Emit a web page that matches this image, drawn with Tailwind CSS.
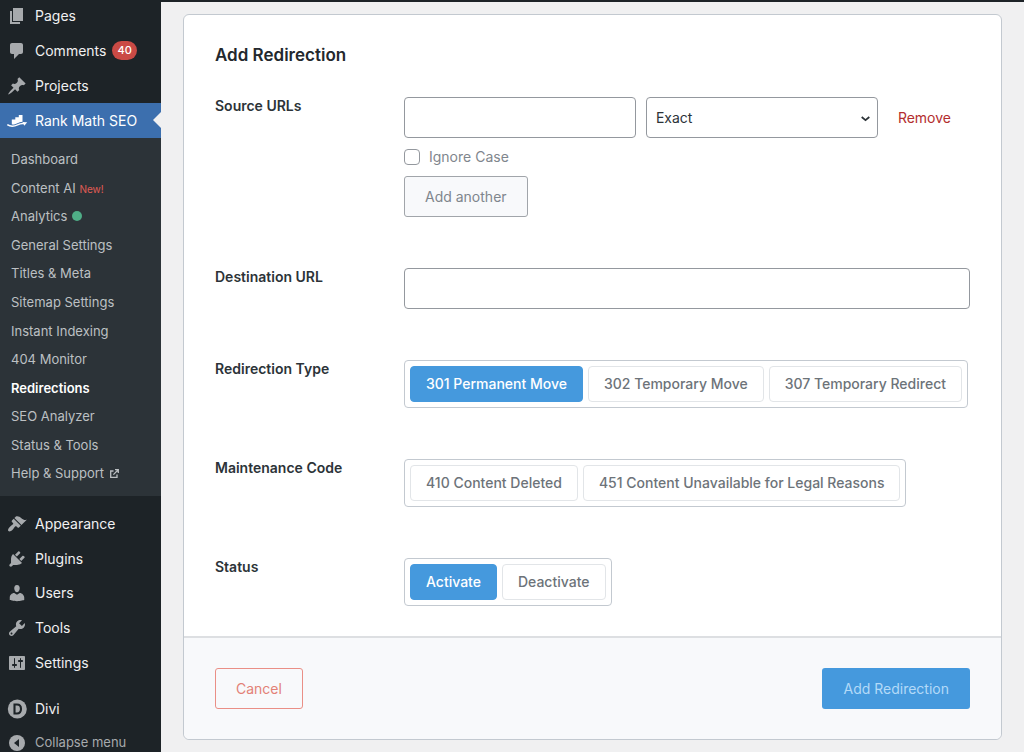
<!DOCTYPE html>
<html lang="en">
<head>
<meta charset="utf-8">
<meta name="viewport" content="width=device-width, initial-scale=1">
<title>Redirections</title>
<script src="https://cdn.jsdelivr.net/npm/@tailwindcss/browser@4"></script>
</head>
<body class="min-h-screen bg-[#f0f0f1] font-['Inter','Liberation_Sans',sans-serif] text-sm text-[#2c3338]">
<div class="flex h-screen overflow-hidden border-t-2 border-[#1d2327]">

  <!-- Admin menu -->
  <nav aria-label="Main menu" class="-mt-1 w-[161px] shrink-0 bg-[#1d2327] text-[#f0f0f1]">
    <ul>
      <li><a href="#" class="flex h-[35px] items-center gap-2 pl-[7px]">
        <svg class="size-5 fill-[#a7aaad]" viewBox="0 0 20 20" aria-hidden="true"><path d="M6 15V2h10v13H6zm-1 1h8v2H3V5h2v11z"/></svg>Pages</a></li>
      <li><a href="#" class="flex h-[35px] items-center gap-2 pl-[7px]">
        <svg class="size-5 fill-[#a7aaad]" viewBox="0 0 20 20" aria-hidden="true"><path d="M5 2h9c1.1 0 2 .9 2 2v7c0 1.1-.9 2-2 2h-2l-5 5v-5H5c-1.1 0-2-.9-2-2V4c0-1.1.9-2 2-2z"/></svg>
        <span class="flex items-center gap-[6px]">Comments <span class="flex h-[19px] items-center rounded-full bg-[#ca4a45] px-[5px] text-[11px] font-medium text-white">40</span></span></a></li>
      <li><a href="#" class="flex h-[35px] items-center gap-2 pl-[7px]">
        <svg class="size-5 fill-[#a7aaad]" viewBox="0 0 20 20" aria-hidden="true"><path d="M10.44 3.02l1.82-1.82 6.36 6.35-1.83 1.82c-1.05-.68-2.48-.57-3.41.36l-.75.75c-.92.93-1.04 2.35-.35 3.41l-1.83 1.82-2.41-2.41-2.8 2.79c-.42.42-3.38 2.71-3.8 2.29s1.86-3.39 2.28-3.81l2.79-2.79L4.1 9.36l1.83-1.82c1.05.69 2.48.57 3.4-.36l.75-.75c.93-.92 1.05-2.35.36-3.41z"/></svg>Projects</a></li>
      <li>
        <a href="#" class="relative flex h-[35px] items-center gap-2 bg-[#3c6fae] pl-[7px] text-white">
          <svg class="size-5 overflow-visible fill-white" viewBox="0 0 20 20" aria-hidden="true"><path d="M4.800 8.600h3.500V6.300h3.500V3.900h3.700v7.300c-1.500 0-3 .7-4.500 1.500-2.100 1.100-4 1.500-6.200.9z"/><path d="M.7 13.700c3.300 2.200 6.500 1.700 9.800 0 2.400-1.300 4.400-2 6.600-1.300" fill="none" stroke="#3c6fae" stroke-width="2.600"/><path d="M.3 13.700c3.300 2.200 6.700 1.900 10.200.2 2.300-1.200 4.300-1.900 6.500-1.300" fill="none" stroke="white" stroke-width="1.500"/><path d="M15.500 10.900l4.700.3-2.900 3.500z"/></svg>Rank Math SEO
          <svg class="absolute right-0 top-[9px] h-4 w-2 fill-[#f0f0f1]" viewBox="0 0 8 16" aria-hidden="true"><path d="M8 0v16L0 8z"/></svg>
        </a>
        <ul class="grid min-h-[358px] grid-rows-12 bg-[#2c3338] pt-[7px] pb-2 pl-[11px] text-[13px] text-[#bcc0c3]">
          <li class="flex items-center"><a href="#">Dashboard</a></li>
          <li class="flex items-center"><a href="#">Content AI <span class="text-[10px] text-[#e05c55]">New!</span></a></li>
          <li class="flex items-center"><a href="#" class="flex items-center gap-[5px]">Analytics <span class="size-[10px] rounded-full bg-[#4fae87]"></span></a></li>
          <li class="flex items-center"><a href="#">General Settings</a></li>
          <li class="flex items-center"><a href="#">Titles &amp; Meta</a></li>
          <li class="flex items-center"><a href="#">Sitemap Settings</a></li>
          <li class="flex items-center"><a href="#">Instant Indexing</a></li>
          <li class="flex items-center"><a href="#">404 Monitor</a></li>
          <li class="flex items-center"><a href="#" aria-current="page" class="font-semibold text-white">Redirections</a></li>
          <li class="flex items-center"><a href="#">SEO Analyzer</a></li>
          <li class="flex items-center"><a href="#">Status &amp; Tools</a></li>
          <li class="flex items-center"><a href="#" class="flex items-center gap-[6px]">Help &amp; Support
            <svg class="size-[9px] fill-none stroke-current" viewBox="0 0 9 9" stroke-width="1.300" aria-hidden="true"><path d="M3.500 2H.7v6.300H7V5.500M5 .7h3.300V4M8 1L3.400 5.600"/></svg></a></li>
        </ul>
      </li>
    </ul>
    <ul class="mt-[11px] grid min-h-[173px] grid-rows-5">
      <li class="flex items-center"><a href="#" class="flex items-center gap-2 pl-[7px]">
        <svg class="size-5 fill-[#a7aaad]" viewBox="0 0 20 20" aria-hidden="true"><path d="M14.480 11.060L7.410 3.990l1.500-1.500c.5-.56 2.300-.47 3.510.32 1.210.8 1.430 1.280 2.910 2.100 1.180.64 2.450 1.260 4.450.85zm-.71.71L6.700 4.700 4.930 6.470c-.39.39-.39 1.020 0 1.410l1.060 1.060c.39.39.39 1.030 0 1.420-.6.6-1.430 1.110-2.210 1.690-.35.26-.7.53-1.010.84C1.430 14.230.4 16.080 1.400 17.070c.99 1 2.840-.03 4.180-1.360.31-.31.58-.66.85-1.020.57-.78 1.080-1.610 1.690-2.210.39-.39 1.020-.39 1.410 0l1.060 1.060c.39.39 1.020.39 1.410 0z"/></svg>Appearance</a></li>
      <li class="flex items-center"><a href="#" class="flex items-center gap-2 pl-[7px]">
        <svg class="size-5 fill-[#a7aaad]" viewBox="0 0 20 20" aria-hidden="true"><path d="M13.110 4.360L9.870 7.600 8 5.730l3.240-3.240c.35-.34 1.050-.2 1.560.32.52.51.66 1.210.31 1.550zm-8 1.770l.91-1.120 9.010 9.010-1.190.84c-.71.71-2.630 1.160-3.820 1.160H6.140L4.900 17.260c-.59.59-1.540.59-2.120 0-.59-.58-.59-1.530 0-2.120l1.240-1.240v-3.880c0-1.130.4-3.190 1.090-3.890zm7.260 3.970l3.240-3.240c.34-.35 1.040-.21 1.550.31.52.51.66 1.210.31 1.550l-3.240 3.250z"/></svg>Plugins</a></li>
      <li class="flex items-center"><a href="#" class="flex items-center gap-2 pl-[7px]">
        <svg class="size-5 fill-[#a7aaad]" viewBox="0 0 20 20" aria-hidden="true"><path d="M10 9.250c-2.270 0-2.730-3.440-2.730-3.440C7 4.020 7.820 2 9.970 2c2.160 0 2.980 2.020 2.710 3.810 0 0-.41 3.440-2.680 3.440zm0 2.570L12.720 10c2.390 0 4.520 2.330 4.520 4.530v2.490s-3.650 1.130-7.240 1.130c-3.650 0-7.240-1.130-7.240-1.130v-2.490c0-2.250 1.940-4.480 4.470-4.480z"/></svg>Users</a></li>
      <li class="flex items-center"><a href="#" class="flex items-center gap-2 pl-[7px]">
        <svg class="size-5 fill-[#a7aaad]" viewBox="0 0 20 20" aria-hidden="true"><path d="M16.680 9.770c-1.340 1.340-3.300 1.670-4.950.99l-5.410 6.520c-.99.99-2.590.99-3.580 0s-.99-2.590 0-3.570l6.520-5.420c-.68-1.650-.35-3.610.99-4.950 1.280-1.280 3.120-1.620 4.720-1.060l-2.890 2.890 2.820 2.820 2.860-2.870c.53 1.580.18 3.390-1.080 4.650zM3.810 16.210c.4.39 1.040.39 1.430 0 .4-.4.4-1.040 0-1.430-.39-.4-1.030-.4-1.430 0-.39.39-.39 1.030 0 1.430z"/></svg>Tools</a></li>
      <li class="flex items-center"><a href="#" class="flex items-center gap-2 pl-[7px]">
        <svg class="size-5 fill-[#a7aaad]" viewBox="0 0 20 20" aria-hidden="true"><path d="M18 16V4c0-.55-.45-1-1-1H3c-.55 0-1 .45-1 1v12c0 .55.45 1 1 1h14c.55 0 1-.45 1-1zM8 11h1c.55 0 1 .45 1 1s-.45 1-1 1H8v1.500c0 .28-.22.5-.5.5s-.5-.22-.5-.5V13H6c-.55 0-1-.45-1-1s.45-1 1-1h1V5.500c0-.28.22-.5.5-.5s.5.22.5.5V11zm5-2h-1c-.55 0-1-.45-1-1s.45-1 1-1h1V5.500c0-.28.22-.5.5-.5s.5.22.5.5V7h1c.55 0 1 .45 1 1s-.45 1-1 1h-1v5.500c0 .28-.22.5-.5.5s-.5-.22-.5-.5V9z"/></svg>Settings</a></li>
    </ul>
    <a href="#" class="mt-[11px] flex h-[35px] items-center gap-2 pl-[7px]">
      <svg class="size-5" viewBox="0 0 20 20" aria-hidden="true"><circle cx="10.300" cy="10" r="9.500" fill="#a7aaad"/><path d="M7.500 5.500H10c2.600 0 4 1.700 4 4.500s-1.400 4.500-4 4.500H7.500z" fill="none" stroke="#1d2327" stroke-width="2.100"/></svg>Divi</a>
    <button type="button" class="flex h-[33px] w-full items-center gap-2 pl-[7px] text-[13px] text-[#a7aaad]">
      <svg class="size-5" viewBox="0 0 20 20" aria-hidden="true"><circle cx="10" cy="10" r="8" fill="#a7aaad"/><path d="M12 6v8l-5-4z" fill="#1d2327"/></svg>Collapse menu</button>
  </nav>

  <!-- Redirection editor -->
  <main class="min-w-0 flex-1 px-[22px] pt-3">
    <form class="rounded-md border border-[#c3c9d0] bg-white">
      <div class="px-[31px] pt-7 pb-[30px]">
        <h2 class="text-[17px] leading-6 font-semibold text-[#23282d]">Add Redirection</h2>
        <div class="mt-[30px] grid grid-cols-[189px_minmax(0,1fr)] gap-y-[51px]">

          <label for="source" class="leading-[18px] font-semibold">Source URLs</label>
          <div>
            <div class="flex items-center">
              <div class="grid flex-1 grid-cols-2 gap-[10px]">
                <input id="source" type="text" class="h-[41px] w-full rounded-[4px] border border-[#94989e] px-2">
                <div class="relative">
                  <select aria-label="Match type" class="h-[41px] w-full appearance-none rounded-[4px] border border-[#94989e] bg-white px-[9px]">
                    <option>Exact</option>
                  </select>
                  <svg class="pointer-events-none absolute right-2 top-[19px] h-[6px] w-[9px] fill-none stroke-[#2c3338]" viewBox="0 0 9 6" stroke-width="1.700" aria-hidden="true"><path d="M.7 1l3.800 3.200L8.300 1"/></svg>
                </div>
              </div>
              <button type="button" class="mr-[19px] ml-5 text-[#b32d2e]">Remove</button>
            </div>
            <label class="mt-[11px] flex h-4 w-fit items-center gap-[9px] text-[#7f868d]">
              <input type="checkbox" class="size-4 appearance-none rounded-[4px] border border-[#94989e] bg-white checked:bg-[#4599dd]">Ignore Case</label>
            <button type="button" class="mt-[11px] h-[41px] rounded-[3px] border border-[#a1a5aa] bg-[#f8f9fb] px-5 text-[#7f868d]">Add another</button>
          </div>

          <label for="destination" class="leading-[18px] font-semibold">Destination URL</label>
          <input id="destination" type="text" class="h-[41px] w-full rounded-[4px] border border-[#94989e] px-2">

          <span id="type-label" class="leading-[18px] font-semibold">Redirection Type</span>
          <div role="radiogroup" aria-labelledby="type-label" class="flex w-fit gap-[5px] rounded-[4px] border border-[#c3c9d0] p-[5px] font-medium whitespace-nowrap text-[#6d7379]">
            <label class="relative flex h-9 items-center rounded-[4px] border border-[#e2e5e8] px-[15px] has-checked:border-[#4599dd] has-checked:bg-[#4599dd] has-checked:text-white"><input type="radio" name="type" class="sr-only" checked>301 Permanent Move</label>
            <label class="relative flex h-9 items-center rounded-[4px] border border-[#e2e5e8] px-[15px] has-checked:border-[#4599dd] has-checked:bg-[#4599dd] has-checked:text-white"><input type="radio" name="type" class="sr-only">302 Temporary Move</label>
            <label class="relative flex h-9 items-center rounded-[4px] border border-[#e2e5e8] px-[15px] has-checked:border-[#4599dd] has-checked:bg-[#4599dd] has-checked:text-white"><input type="radio" name="type" class="sr-only">307 Temporary Redirect</label>
          </div>

          <span id="code-label" class="leading-[18px] font-semibold">Maintenance Code</span>
          <div role="radiogroup" aria-labelledby="code-label" class="flex w-fit gap-[5px] rounded-[4px] border border-[#c3c9d0] p-[5px] font-medium whitespace-nowrap text-[#6d7379]">
            <label class="relative flex h-9 items-center rounded-[4px] border border-[#e2e5e8] px-[15px] has-checked:border-[#4599dd] has-checked:bg-[#4599dd] has-checked:text-white"><input type="radio" name="code" class="sr-only">410 Content Deleted</label>
            <label class="relative flex h-9 items-center rounded-[4px] border border-[#e2e5e8] px-[15px] has-checked:border-[#4599dd] has-checked:bg-[#4599dd] has-checked:text-white"><input type="radio" name="code" class="sr-only">451 Content Unavailable for Legal Reasons</label>
          </div>

          <span id="status-label" class="leading-[18px] font-semibold">Status</span>
          <div role="radiogroup" aria-labelledby="status-label" class="flex w-fit gap-[5px] rounded-[4px] border border-[#c3c9d0] p-[5px] font-medium whitespace-nowrap text-[#6d7379]">
            <label class="relative flex h-9 items-center rounded-[4px] border border-[#e2e5e8] px-[15px] has-checked:border-[#4599dd] has-checked:bg-[#4599dd] has-checked:text-white"><input type="radio" name="status" class="sr-only" checked>Activate</label>
            <label class="relative flex h-9 items-center rounded-[4px] border border-[#e2e5e8] px-[15px] has-checked:border-[#4599dd] has-checked:bg-[#4599dd] has-checked:text-white"><input type="radio" name="status" class="sr-only">Deactivate</label>
          </div>
        </div>
      </div>
      <div class="flex justify-between rounded-b-md border-t-2 border-[#dddfe2] bg-[#f8f9fb] px-[31px] py-[30px]">
        <button type="button" class="h-[41px] rounded-[3px] border border-[#ea8f86] px-5 text-[#e38177]">Cancel</button>
        <button type="submit" class="h-[41px] rounded-[3px] bg-[#4599dd] px-[21px] text-[#b3daf8]">Add Redirection</button>
      </div>
    </form>
  </main>
</div>
</body>
</html>
